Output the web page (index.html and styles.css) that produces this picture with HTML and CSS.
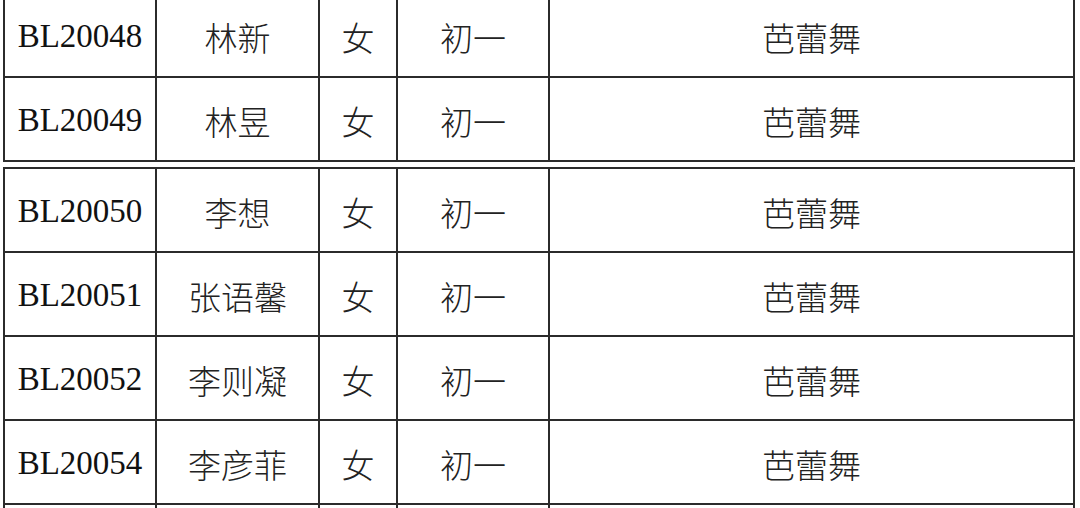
FILE: index.html
```html
<!DOCTYPE html>
<html lang="zh">
<head>
<meta charset="utf-8">
<link rel="stylesheet" href="styles.css">
</head>
<body>
<div class="page">
  <table class="roster first">
    <colgroup><col class="c1"><col class="c2"><col class="c3"><col class="c4"><col class="c5"></colgroup>
    <tr><td>BL20048</td><td class="cn">林新</td><td class="cn">女</td><td class="cn">初一</td><td class="cn">芭蕾舞</td></tr>
    <tr><td>BL20049</td><td class="cn">林昱</td><td class="cn">女</td><td class="cn">初一</td><td class="cn">芭蕾舞</td></tr>
  </table>
  <table class="roster second">
    <colgroup><col class="c1"><col class="c2"><col class="c3"><col class="c4"><col class="c5"></colgroup>
    <tr><td>BL20050</td><td class="cn">李想</td><td class="cn">女</td><td class="cn">初一</td><td class="cn">芭蕾舞</td></tr>
    <tr><td>BL20051</td><td class="cn">张语馨</td><td class="cn">女</td><td class="cn">初一</td><td class="cn">芭蕾舞</td></tr>
    <tr><td>BL20052</td><td class="cn">李则凝</td><td class="cn">女</td><td class="cn">初一</td><td class="cn">芭蕾舞</td></tr>
    <tr><td>BL20054</td><td class="cn">李彦菲</td><td class="cn">女</td><td class="cn">初一</td><td class="cn">芭蕾舞</td></tr>
    <tr><td></td><td class="cn"></td><td class="cn"></td><td class="cn"></td><td class="cn"></td></tr>
  </table>
</div>
</body>
</html>
```
FILE: styles.css
```css
html, body {
  margin: 0;
  padding: 0;
  background: #ffffff;
  overflow: hidden;
  height: 508px;
}
.page {
  width: 1080px;
  padding-left: 3px;
}
.roster {
  border-collapse: collapse;
  table-layout: fixed;
  width: 1072px;
  font-family: "Liberation Serif", "Noto Sans CJK SC", serif;
  font-size: 33px;
  color: #111;
}
.roster td {
  border: 2px solid #2b2b2b;
  height: 79px;
  padding: 3px 0 0 0;
  text-align: center;
  vertical-align: middle;
  white-space: nowrap;
  overflow: hidden;
}
.roster td.cn {
  font-family: "Noto Sans CJK SC", sans-serif;
  font-weight: 300;
  color: #222;
}
.first {
  margin-top: -8px;
}
.second {
  margin-top: 5px;
}
.c1 { width: 152px; }
.c2 { width: 163px; }
.c3 { width: 78px; }
.c4 { width: 152px; }
.c5 { width: 525px; }
```
